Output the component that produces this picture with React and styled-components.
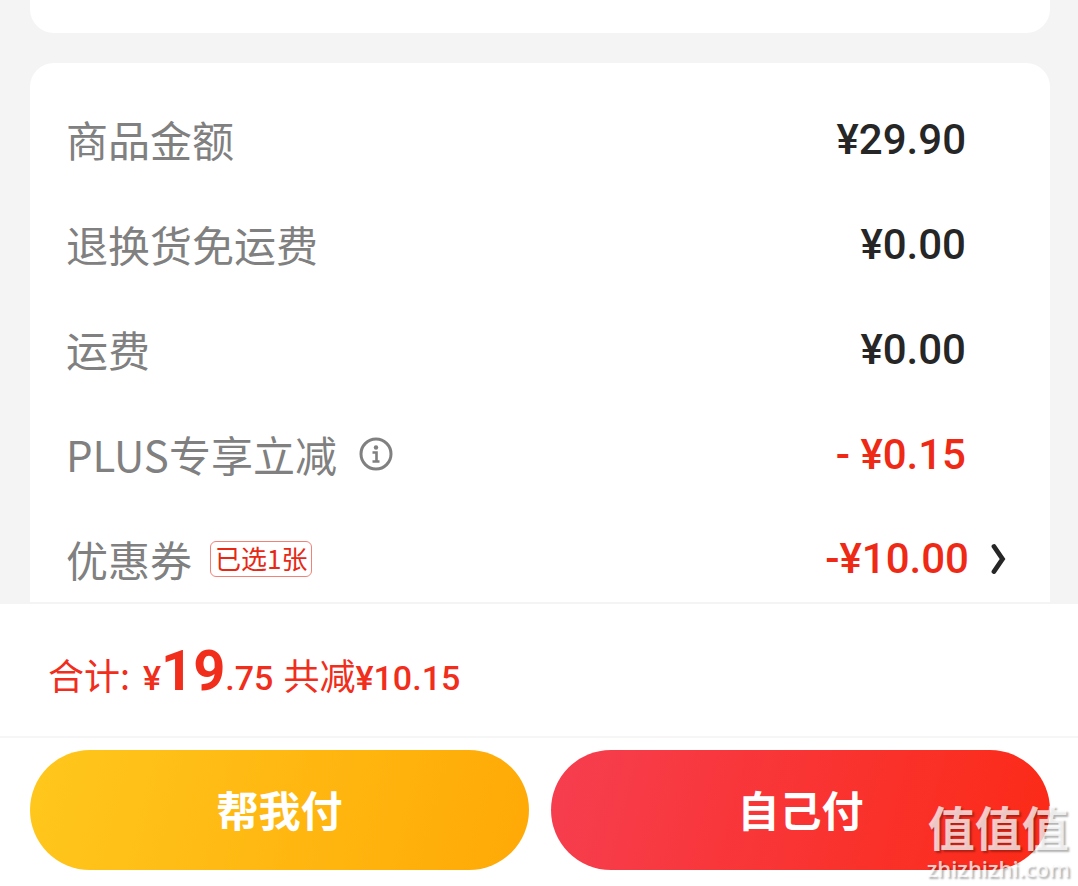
import React from "react";
import styled, { createGlobalStyle, css } from "styled-components";

const GlobalStyle = createGlobalStyle`
  * { box-sizing: border-box; }
  body {
    margin: 0;
    background: #f4f4f4;
    font-family: "Noto Sans CJK SC", "Noto Sans", sans-serif;
  }
  button {
    margin: 0;
    padding: 0;
    border: 0;
    background: none;
    font: inherit;
    color: inherit;
    cursor: pointer;
  }
`;

const Page = styled.div`
  position: relative;
  display: flex;
  flex-direction: column;
  height: 100vh;
`;

const Content = styled.main`
  flex: 1;
  min-height: 0;
  overflow-y: auto;
  scrollbar-width: none;
  padding: 0 28px 0 30px;
`;

const PreviousCard = styled.section`
  height: 33px;
  margin-bottom: 30px;
  background: #fff;
  border-radius: 0 0 24px 24px;
`;

const Card = styled.section`
  padding: 26px 36px;
  background: #fff;
  border-radius: 24px;
`;

const Row = styled.div`
  display: flex;
  align-items: center;
  justify-content: space-between;
  height: 105px;
`;

const Label = styled.div`
  display: flex;
  align-items: center;
  padding-bottom: 6px;
  color: #808080;
  font-size: 42px;
  line-height: 60px;
`;

const amountText = css`
  font-family: Roboto, "Noto Sans CJK SC", sans-serif;
  font-size: 42px;
  font-weight: 500;
  line-height: 60px;
  white-space: pre;
`;

const Amount = styled.div`
  ${amountText}
  padding: 0 48px 4px 0;
  color: ${(p) => (p.$discount ? "#ee2a16" : "#262626")};
`;

const CouponButton = styled.button`
  && {
    ${amountText}
    display: flex;
    align-items: center;
    gap: 22px;
    padding: 0 7px 6px 0;
    color: #ee2a16;
  }
`;

const InfoButton = styled.button`
  display: flex;
  margin-left: 22px;
`;

const Tag = styled.span`
  height: 36px;
  margin-left: 18px;
  padding: 0 4px;
  border: 1px solid #f08278;
  border-radius: 6px;
  color: #e62814;
  font-size: 26px;
  line-height: 32px;
`;

const Footer = styled.footer`
  flex: none;
  background: #fff;
  border-top: 2px solid #f4f4f4;
`;

const Total = styled.div`
  display: flex;
  align-items: baseline;
  height: 134px;
  padding: 27px 48px 0;
  border-bottom: 2px solid #f6f6f6;
  color: #f12d1c;
  font-size: 36px;
  line-height: 80px;
`;

const Money = styled.span`
  font-family: Roboto, "Noto Sans CJK SC", sans-serif;
  font-size: ${(p) => (p.$large ? 56 : 34)}px;
  font-weight: ${(p) => (p.$large ? 700 : 500)};
`;

const TotalPrice = styled.span`
  margin: 0 10px 0 13px;
`;

const Actions = styled.div`
  display: flex;
  gap: 22px;
  padding: 12px 28px 16px 30px;
`;

const gradients = {
  amber: "linear-gradient(104deg, #ffc71c, #ffa906)",
  red: "linear-gradient(104deg, #f63e50, #fc2a16)",
};

const PayButton = styled.button`
  && {
    flex: 1;
    height: 120px;
    padding-bottom: 2px;
    border-radius: 60px;
    background: ${(p) => gradients[p.$tone]};
    color: #fff;
    font-size: 42px;
    font-weight: 700;
    line-height: 60px;
  }
`;

const Watermark = styled.div`
  position: absolute;
  right: 8px;
  bottom: 4px;
  display: flex;
  flex-direction: column;
  align-items: center;
  color: rgba(255, 255, 255, 0.75);
  text-shadow: 2px 2px 2px rgba(0, 0, 0, 0.3);
  pointer-events: none;
`;

const WatermarkName = styled.span`
  font-size: 47px;
  font-weight: 700;
  line-height: 56px;
`;

const WatermarkSite = styled.span`
  font-family: "Open Sans", sans-serif;
  font-size: 22px;
  font-weight: 600;
  line-height: 28px;
`;

function InfoIcon() {
  return (
    <svg width="34" height="34" viewBox="0 0 34 34" fill="none" stroke="#808080">
      <circle cx="17" cy="17" r="15" strokeWidth="3" />
      <circle cx="17" cy="10.5" r="2.2" fill="#808080" stroke="none" />
      <path d="M13.5 15.5H17.5V24M13.5 24.5H20.5" strokeWidth="2.6" />
    </svg>
  );
}

function Chevron() {
  return (
    <svg width="16" height="32" viewBox="0 0 16 32" fill="none">
      <path d="M3 3.5L11.5 16L3 28.5" stroke="#262626" strokeWidth="4.8" strokeLinecap="round" />
    </svg>
  );
}

const fees = [
  { label: "商品金额", amount: "¥29.90" },
  { label: "退换货免运费", amount: "¥0.00" },
  { label: "运费", amount: "¥0.00" },
  { label: "PLUS专享立减", amount: "- ¥0.15", discount: true, info: true },
];

export default function App() {
  return (
    <>
      <GlobalStyle />
      <Page>
        <Content>
          <PreviousCard />
          <Card>
            {fees.map((fee) => (
              <Row key={fee.label}>
                <Label>
                  {fee.label}
                  {fee.info && (
                    <InfoButton type="button" aria-label="说明">
                      <InfoIcon />
                    </InfoButton>
                  )}
                </Label>
                <Amount $discount={fee.discount}>{fee.amount}</Amount>
              </Row>
            ))}
            <Row>
              <Label>
                优惠券<Tag>已选1张</Tag>
              </Label>
              <CouponButton type="button">
                -¥10.00
                <Chevron />
              </CouponButton>
            </Row>
          </Card>
        </Content>
        <Footer>
          <Total>
            <span>合计:</span>
            <TotalPrice>
              <Money>¥</Money>
              <Money $large>19</Money>
              <Money>.75</Money>
            </TotalPrice>
            <span>
              共减<Money>¥10.15</Money>
            </span>
          </Total>
          <Actions>
            <PayButton type="button" $tone="amber">帮我付</PayButton>
            <PayButton type="button" $tone="red">自己付</PayButton>
          </Actions>
        </Footer>
        <Watermark>
          <WatermarkName>值值值</WatermarkName>
          <WatermarkSite>zhizhizhi.com</WatermarkSite>
        </Watermark>
      </Page>
    </>
  );
}
